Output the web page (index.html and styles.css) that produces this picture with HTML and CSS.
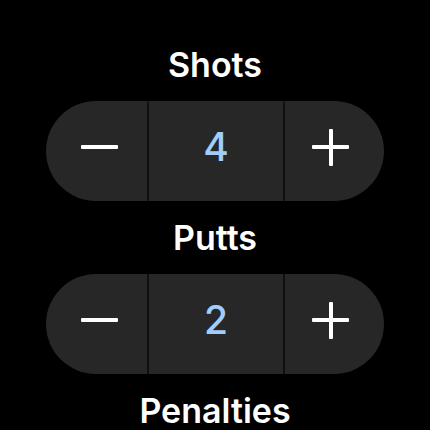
FILE: index.html
```html
<!DOCTYPE html>
<html>
<head>
<meta charset="utf-8">
<link rel="stylesheet" href="styles.css">
</head>
<body>
<main class="screen">
  <section class="group">
    <h2 class="label">Shots</h2>
    <div class="stepper">
      <div class="seg seg-minus"><span class="minus"></span></div>
      <div class="divider"></div>
      <div class="seg seg-value"><span class="value">4</span></div>
      <div class="divider"></div>
      <div class="seg seg-plus"><span class="plus"></span></div>
    </div>
  </section>
  <section class="group">
    <h2 class="label">Putts</h2>
    <div class="stepper">
      <div class="seg seg-minus"><span class="minus"></span></div>
      <div class="divider"></div>
      <div class="seg seg-value"><span class="value">2</span></div>
      <div class="divider"></div>
      <div class="seg seg-plus"><span class="plus"></span></div>
    </div>
  </section>
  <section class="group">
    <h2 class="label">Penalties</h2>
  </section>
</main>
</body>
</html>
```
FILE: styles.css
```css
html, body {
  margin: 0;
  padding: 0;
  background: #000;
  width: 430px;
  height: 430px;
  overflow: hidden;
}
.screen {
  display: flex;
  flex-direction: column;
  align-items: center;
  padding-top: 44px;
  gap: 16px;
  font-family: Inter, "Noto Sans", sans-serif;
}
.group {
  display: flex;
  flex-direction: column;
  align-items: center;
  gap: 16px;
}
.label {
  margin: 0;
  font-size: 34px;
  line-height: 41px;
  font-weight: 600;
  color: #fff;
  letter-spacing: 0;
}
.stepper {
  width: 338px;
  height: 100px;
  border-radius: 50px;
  background: #272727;
  display: grid;
  grid-template-columns: 101px 2px 134px 2px 99px;
  overflow: hidden;
}
.divider {
  background: #111;
}
.seg {
  display: flex;
  align-items: center;
  justify-content: center;
  padding-bottom: 8px;
}
.seg-minus { padding-left: 6px; }
.seg-plus { padding-right: 8px; }
.minus {
  display: block;
  width: 37px;
  height: 4px;
  background: #fff;
  border-radius: 1px;
}
.plus {
  position: relative;
  display: block;
  width: 37px;
  height: 37px;
}
.plus::before, .plus::after {
  content: "";
  position: absolute;
  background: #fff;
  border-radius: 1px;
}
.plus::before {
  left: 0; right: 0; top: 16.5px; height: 4px;
}
.plus::after {
  top: 0; bottom: 0; left: 16.5px; width: 4px;
}
.value {
  font-size: 39px;
  line-height: 44px;
  font-weight: 500;
  color: #a0cdfa;
}
```
